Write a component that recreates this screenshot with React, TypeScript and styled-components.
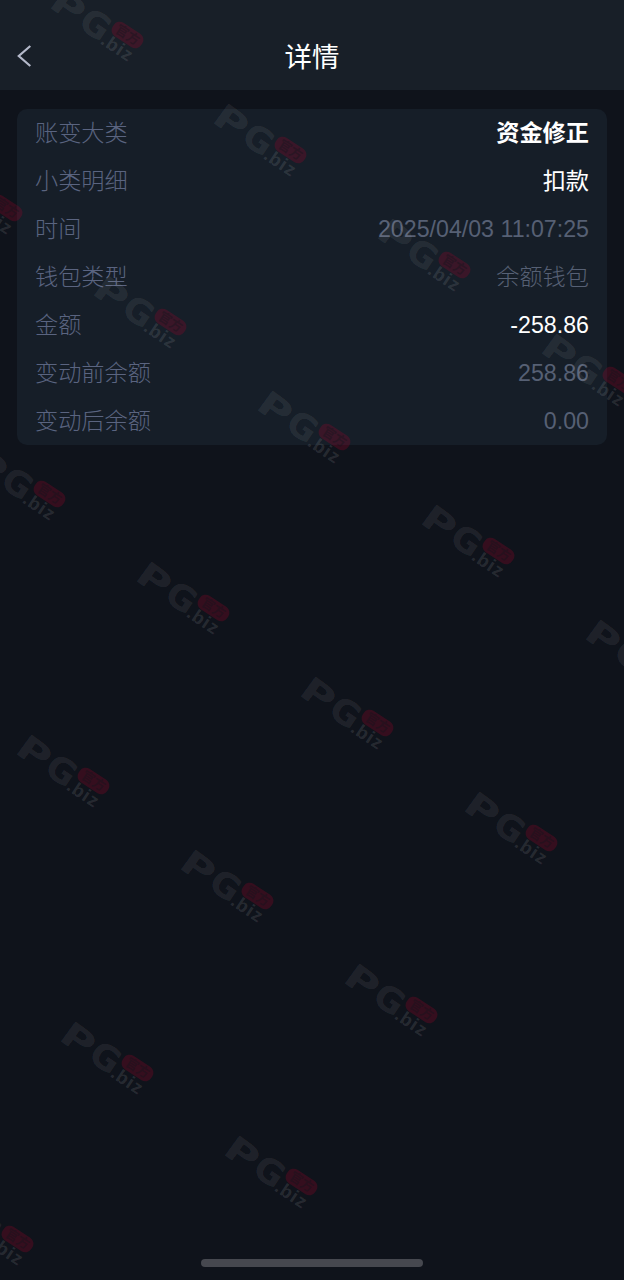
import React from 'react';
import styled, { createGlobalStyle } from 'styled-components';

const GlobalStyle = createGlobalStyle`
  html, body { margin: 0; background: #0f131b; }
  * { box-sizing: border-box; }
`;

const Page = styled.div`
  position: relative;
  display: flex;
  flex-direction: column;
  height: 1280px;
  overflow: hidden;
  background: #0f131b;
  font-family: 'Liberation Sans', 'Noto Sans CJK SC', sans-serif;
`;

const Header = styled.header`
  display: grid;
  grid-template-columns: 60px 1fr 60px;
  align-items: center;
  height: 90px;
  padding-top: 22px;
  background: #181f28;
`;

const BackButton = styled.button`
  display: flex;
  align-items: center;
  height: 44px;
  padding: 0 0 0 16px;
  border: 0;
  background: none;
  color: #b4b9ca;
`;

const Title = styled.h1`
  margin: 0;
  padding-top: 4px;
  text-align: center;
  font-size: 27.4px;
  font-weight: 400;
  line-height: 40px;
  color: #fff;
`;

const Card = styled.dl`
  margin: 19px 17px 0 17px;
  padding: 0 18px;
  border-radius: 10px;
  background: #161e28;
`;

const Row = styled.div`
  display: flex;
  align-items: center;
  justify-content: space-between;
  height: 48px;
  font-size: 23.2px;
  line-height: 34px;
`;

const Label = styled.dt`
  color: #5a6480;
  font-weight: 300;
`;

type Tone = 'strong' | 'bright' | 'muted';

const Value = styled.dd<{ $tone: Tone }>`
  margin: 0;
  color: ${({ $tone }) => ($tone === 'muted' ? '#566074' : '#fff')};
  font-weight: ${({ $tone }) => ({ strong: 700, bright: 400, muted: 300 })[$tone]};
`;

const HomeIndicator = styled.div`
  width: 222px;
  height: 8px;
  margin: auto auto 13px;
  border-radius: 4px;
  background: #46484f;
`;

const WatermarkLayer = styled.svg`
  position: absolute;
  inset: 0;
  pointer-events: none;
`;

const rows: { label: string; value: string; tone: Tone }[] = [
  { label: '账变大类', value: '资金修正', tone: 'strong' },
  { label: '小类明细', value: '扣款', tone: 'bright' },
  { label: '时间', value: '2025/04/03 11:07:25', tone: 'muted' },
  { label: '钱包类型', value: '余额钱包', tone: 'muted' },
  { label: '金额', value: '-258.86', tone: 'bright' },
  { label: '变动前余额', value: '258.86', tone: 'muted' },
  { label: '变动后余额', value: '0.00', tone: 'muted' },
];

const marks = [
  [50, -13], [213, 102], [377, 217], [541, 332],
  [-71, 160], [93, 274], [257, 389], [421, 503], [585, 618],
  [-28, 446], [136, 560], [300, 675], [464, 790],
  [16, 733], [180, 848], [344, 962],
  [60, 1020], [224, 1134], [-60, 1191],
];

const Watermark = ({ x, y }: { x: number; y: number }) => (
  <g transform={`translate(${x} ${y})`}>
    <g fill="#fff" fillOpacity="0.085" fontWeight="700">
      <g fontFamily="DejaVu Sans, sans-serif" fontSize="34">
        <text transform="translate(-2.5 19) rotate(36) scale(1.36 1)">P</text>
        <text transform="translate(26.5 39) rotate(35) scale(1.06 1.02)">G</text>
      </g>
      <text
        transform="translate(49.5 56) rotate(34)"
        fontFamily="Liberation Sans, sans-serif"
        fontSize="18.5"
        letterSpacing="1"
        fillOpacity="0.11"
      >
        .biz
      </text>
    </g>
    <g transform="translate(77.5 48) rotate(33)">
      <rect x="-17" y="-8" width="34" height="16" rx="7" fill="#b00028" fillOpacity="0.24" />
      <text
        y="4.5"
        textAnchor="middle"
        fontFamily="Noto Sans CJK SC, sans-serif"
        fontSize="13"
        fontWeight="700"
        fill="#10141c"
        fillOpacity="0.4"
      >
        官方
      </text>
    </g>
  </g>
);

export default function App() {
  return (
    <Page>
      <GlobalStyle />
      <Header>
        <BackButton aria-label="返回">
          <svg width="18" height="24" viewBox="0 0 18 24" fill="none" stroke="currentColor" strokeWidth="2.2">
            <path d="M14.3 2L2.8 12l11.5 10" />
          </svg>
        </BackButton>
        <Title>详情</Title>
      </Header>
      <Card>
        {rows.map((row) => (
          <Row key={row.label}>
            <Label>{row.label}</Label>
            <Value $tone={row.tone}>{row.value}</Value>
          </Row>
        ))}
      </Card>
      <HomeIndicator />
      <WatermarkLayer width="624" height="1280" aria-hidden="true">
        {marks.map(([x, y]) => (
          <Watermark key={`${x},${y}`} x={x} y={y} />
        ))}
      </WatermarkLayer>
    </Page>
  );
}
